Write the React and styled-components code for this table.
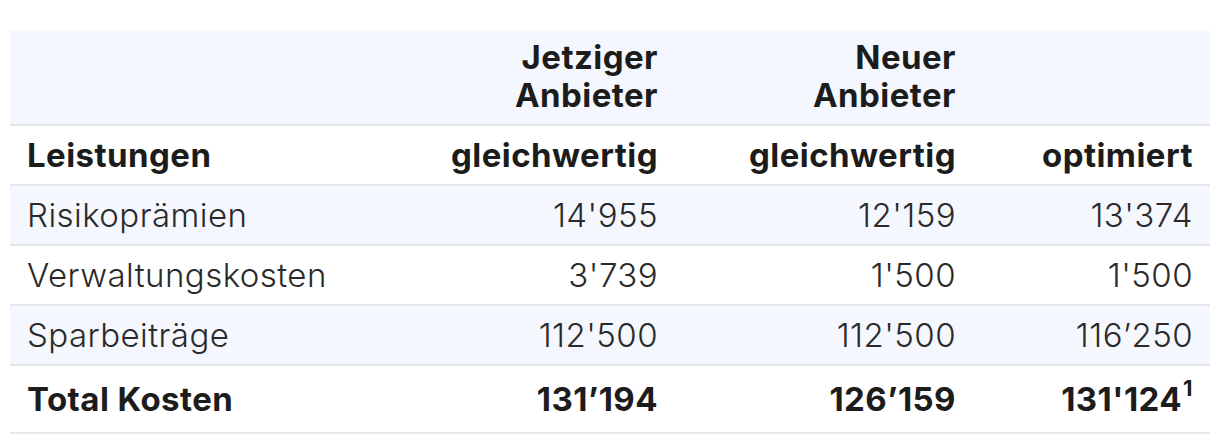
import React from "react";
import styled, { createGlobalStyle } from "styled-components";

const GlobalStyle = createGlobalStyle`
  html, body {
    margin: 0;
    padding: 0;
    background: #ffffff;
  }
  body {
    font-family: Inter, "Noto Sans", "Liberation Sans", sans-serif;
    color: #1c1c1c;
  }
`;

const Page = styled.div`
  padding: 30px 10px 12px 10px;
`;

const Table = styled.table`
  width: 1200px;
  border-collapse: collapse;
  table-layout: fixed;
  font-size: 33px;
  letter-spacing: 0.45px;
`;

const Row = styled.tr`
  background: ${(p) => (p.$shaded ? "#f4f7fe" : "#ffffff")};
  border-bottom: 2px solid #e6e8ec;
`;

const HeadCell = styled.th`
  padding: ${(p) => (p.$top ? "0 17px 10px 17px" : "0 17px")};
  height: ${(p) => (p.$top ? "84px" : "58px")};
  text-align: ${(p) => (p.$left ? "left" : "right")};
  vertical-align: ${(p) => (p.$top ? "bottom" : "middle")};
  font-weight: 700;
  line-height: 38px;
  color: #1c1c1c;
`;

const Cell = styled.td`
  padding: 0 17px;
  height: ${(p) => (p.$total ? "66px" : "58px")};
  text-align: ${(p) => (p.$left ? "left" : "right")};
  vertical-align: middle;
  font-weight: ${(p) => (p.$total ? 700 : 300)};
  color: ${(p) => (p.$total ? "#1c1c1c" : "#2a2a2a")};
  line-height: 38px;
  white-space: nowrap;
`;

const Note = styled.sup`
  font-size: 22px;
  line-height: 0;
  vertical-align: 15px;
  margin-left: 1px;
`;

const rows = [
  { label: "Risikoprämien", values: ["14'955", "12'159", "13'374"], shaded: true },
  { label: "Verwaltungskosten", values: ["3'739", "1'500", "1'500"], shaded: false },
  { label: "Sparbeiträge", values: ["112'500", "112'500", "116’250"], shaded: true },
];

export default function App() {
  return (
    <>
      <GlobalStyle />
      <Page>
        <Table>
          <colgroup>
            <col style={{ width: 367 }} />
            <col style={{ width: 298 }} />
            <col style={{ width: 298 }} />
            <col style={{ width: 237 }} />
          </colgroup>
          <thead>
            <Row $shaded>
              <HeadCell $top $left />
              <HeadCell $top>
                Jetziger
                <br />
                Anbieter
              </HeadCell>
              <HeadCell $top>
                Neuer
                <br />
                Anbieter
              </HeadCell>
              <HeadCell $top />
            </Row>
            <Row>
              <HeadCell $left>Leistungen</HeadCell>
              <HeadCell>gleichwertig</HeadCell>
              <HeadCell>gleichwertig</HeadCell>
              <HeadCell>optimiert</HeadCell>
            </Row>
          </thead>
          <tbody>
            {rows.map((r) => (
              <Row key={r.label} $shaded={r.shaded}>
                <Cell $left>{r.label}</Cell>
                {r.values.map((v, i) => (
                  <Cell key={i}>{v}</Cell>
                ))}
              </Row>
            ))}
            <Row>
              <Cell $left $total>
                Total Kosten
              </Cell>
              <Cell $total>131’194</Cell>
              <Cell $total>126’159</Cell>
              <Cell $total>
                131'124<Note>1</Note>
              </Cell>
            </Row>
          </tbody>
        </Table>
      </Page>
    </>
  );
}
